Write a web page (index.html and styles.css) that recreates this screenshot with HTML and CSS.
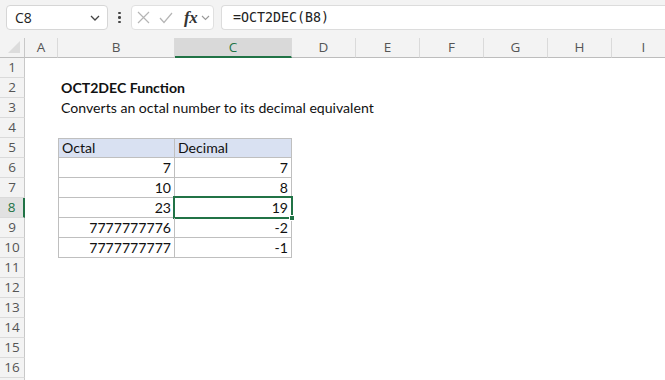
FILE: index.html
```html
<!DOCTYPE html>
<html>
<head>
<meta charset="utf-8">
<link rel="stylesheet" href="styles.css">
</head>
<body>
<div class="toolbar">
  <div class="namebox"><span class="ref">C8</span>
    <svg class="chev" width="10" height="6" viewBox="0 0 10 6"><path d="M1 1 L5 5 L9 1" fill="none" stroke="#444" stroke-width="1.3"/></svg>
  </div>
  <div class="dots"><span></span><span></span><span></span></div>
  <div class="fxbox">
    <svg class="ico" width="13" height="13" viewBox="0 0 13 13"><path d="M1 1 L12 12 M12 1 L1 12" stroke="#b5b5b5" stroke-width="1.2" fill="none"/></svg>
    <svg class="ico" width="14" height="12" viewBox="0 0 14 12"><path d="M1 6 L5 10.5 L13 1" stroke="#b5b5b5" stroke-width="1.2" fill="none"/></svg>
    <span class="fx">fx</span>
    <svg class="chev2" width="9" height="6" viewBox="0 0 9 6"><path d="M1 1 L4.5 4.5 L8 1" fill="none" stroke="#999" stroke-width="1.1"/></svg>
  </div>
  <div class="formula">=OCT2DEC(B8)</div>
</div>
<div class="sheet">
  <div class="corner"><svg width="14" height="14" viewBox="0 0 14 14"><path d="M13 1 L13 13 L1 13 Z" fill="#dcdcdc"/></svg></div>
  <div class="ch">A</div><div class="ch">B</div><div class="ch sel">C</div><div class="ch">D</div><div class="ch">E</div><div class="ch">F</div><div class="ch">G</div><div class="ch">H</div><div class="ch">I</div>

  <div class="rh">1</div><div></div><div></div><div></div><div></div><div></div><div></div><div></div><div></div><div></div>
  <div class="rh">2</div><div></div><div class="txt bold">OCT2DEC Function</div><div></div><div></div><div></div><div></div><div></div><div></div><div></div>
  <div class="rh">3</div><div></div><div class="txt">Converts an octal number to its decimal equivalent</div><div></div><div></div><div></div><div></div><div></div><div></div><div></div>
  <div class="rh">4</div><div></div><div></div><div></div><div></div><div></div><div></div><div></div><div></div><div></div>
  <div class="rh">5</div><div></div><div class="tc th first top">Octal</div><div class="tc th top">Decimal</div><div></div><div></div><div></div><div></div><div></div><div></div>
  <div class="rh">6</div><div></div><div class="tc num first">7</div><div class="tc num">7</div><div></div><div></div><div></div><div></div><div></div><div></div>
  <div class="rh">7</div><div></div><div class="tc num first">10</div><div class="tc num">8</div><div></div><div></div><div></div><div></div><div></div><div></div>
  <div class="rh sel">8</div><div></div><div class="tc num first">23</div><div class="tc num active">19<span class="handle"></span></div><div></div><div></div><div></div><div></div><div></div><div></div>
  <div class="rh">9</div><div></div><div class="tc num first">7777777776</div><div class="tc num">-2</div><div></div><div></div><div></div><div></div><div></div><div></div>
  <div class="rh">10</div><div></div><div class="tc num first">7777777777</div><div class="tc num">-1</div><div></div><div></div><div></div><div></div><div></div><div></div>
  <div class="rh">11</div><div></div><div></div><div></div><div></div><div></div><div></div><div></div><div></div><div></div>
  <div class="rh">12</div><div></div><div></div><div></div><div></div><div></div><div></div><div></div><div></div><div></div>
  <div class="rh">13</div><div></div><div></div><div></div><div></div><div></div><div></div><div></div><div></div><div></div>
  <div class="rh">14</div><div></div><div></div><div></div><div></div><div></div><div></div><div></div><div></div><div></div>
  <div class="rh">15</div><div></div><div></div><div></div><div></div><div></div><div></div><div></div><div></div><div></div>
  <div class="rh">16</div><div></div><div></div><div></div><div></div><div></div><div></div><div></div><div></div><div></div>
  <div class="rh"></div><div></div><div></div><div></div><div></div><div></div><div></div><div></div><div></div><div></div>
</div>
</body>
</html>
```
FILE: styles.css
```css
* { box-sizing: border-box; }
html, body { margin: 0; padding: 0; }
body {
  width: 665px;
  height: 380px;
  overflow: hidden;
  background: #fff;
  font-family: Lato, "Open Sans", sans-serif;
}
.toolbar {
  height: 38px;
  background: #f3f3f3;
  display: flex;
  align-items: flex-start;
  padding-top: 5px;
  padding-left: 6px;
}
.namebox {
  width: 102px;
  height: 25px;
  background: #fff;
  border: 1px solid #d6d6d6;
  border-radius: 4px;
  display: flex;
  align-items: center;
  justify-content: space-between;
  padding: 0 7px 0 8px;
  font-family: "Open Sans", sans-serif;
  font-size: 14px;
  color: #222;
}
.dots {
  width: 23px;
  height: 25px;
  display: flex;
  flex-direction: column;
  align-items: center;
  justify-content: center;
  gap: 2px;
}
.dots span {
  width: 2.5px;
  height: 2.5px;
  background: #444;
  border-radius: 50%;
}
.fxbox {
  width: 83px;
  height: 25px;
  background: #fff;
  border: 1px solid #e0e0e0;
  border-radius: 4px;
  display: flex;
  align-items: center;
  padding-left: 5px;
}
.fxbox .ico:first-child { margin-right: 9px; }
.fx {
  font-family: "Liberation Serif", serif;
  font-style: italic;
  font-weight: bold;
  font-size: 17px;
  color: #333;
  margin-left: 11px;
  margin-right: 3px;
  line-height: 1;
  letter-spacing: -0.3px;
}
.chev2 { margin-top: 1px; }
.formula {
  margin-left: 7px;
  flex: 1;
  height: 25px;
  background: #fff;
  border: 1px solid #dcdcdc;
  border-right: none;
  border-radius: 4px 0 0 4px;
  padding-left: 11px;
  font-family: "DejaVu Sans Mono", monospace;
  font-size: 13.3px;
  line-height: 23px;
  color: #222;
}
.sheet {
  display: grid;
  grid-template-columns: 25px 33px 117px 117px 64px 64px 64px 64px 64px 64px;
  grid-auto-rows: 20px;
  font-size: 14.1px;
  color: #111;
}
.sheet > div { white-space: nowrap; position: relative; }
.corner {
  background: #f3f3f3;
  border-right: 1px solid #c8c8c8;
  border-bottom: 1px solid #bdbdbd;
  display: flex;
  align-items: flex-end;
  justify-content: flex-end;
  padding: 0 3px 3px 0;
}
.ch {
  background: #f3f3f3;
  border-right: 1px solid #dadada;
  border-bottom: 1px solid #bdbdbd;
  text-align: center;
  font-family: "Open Sans", sans-serif;
  font-size: 13.5px;
  line-height: 19px;
  color: #555;
}
.ch.sel {
  background: #d9d9d9;
  border-bottom: 2px solid #217346;
  color: #217346;
}
.rh {
  background: #f3f3f3;
  border-right: 1px solid #c8c8c8;
  border-bottom: 1px solid #dadada;
  text-align: center;
  font-family: "Open Sans", sans-serif;
  font-size: 13.5px;
  line-height: 19px;
  color: #555;
}
.rh.sel {
  background: #e1e1e1;
  border-right: 2px solid #217346;
  color: #217346;
}
.txt {
  padding-left: 3px;
  line-height: 20px;
}
.bold { font-weight: bold; }
.tc {
  border-right: 1px solid #bfbfbf;
  border-bottom: 1px solid #bfbfbf;
  line-height: 20px;
  padding: 0 3px;
}
.tc.first { border-left: 1px solid #bfbfbf; }
.tc.top { border-top: 1px solid #bfbfbf; line-height: 18px; }
.th { background: #d9e1f2; }
.num { text-align: right; }
.active::after {
  content: "";
  position: absolute;
  left: -2px;
  top: -2px;
  right: -2px;
  bottom: -2px;
  border: 2px solid #217346;
}
.handle {
  position: absolute;
  right: -4px;
  bottom: -4px;
  width: 6px;
  height: 6px;
  background: #217346;
  border: 1px solid #fff;
  z-index: 2;
}
```
